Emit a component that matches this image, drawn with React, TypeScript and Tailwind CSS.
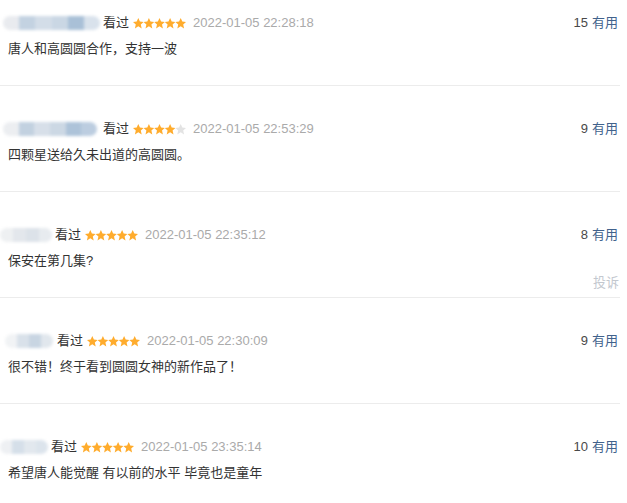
import React from "react"

type Comment = {
  nameW: number
  nameMl: number
  gap: number
  blobs: string[]
  rating: number
  time: string
  votes: number
  text: string
  report?: boolean
}

const comments: Comment[] = [
  {
    nameW: 97,
    nameMl: 3,
    gap: 3,
    blobs: ["#e9ebef", "#c3d2e1", "#d3dde8", "#cad7e4", "#a9c0d7", "#d9e2ec"],
    rating: 5,
    time: "2022-01-05 22:28:18",
    votes: 15,
    text: "唐人和高圆圆合作，支持一波",
  },
  {
    nameW: 94,
    nameMl: 3,
    gap: 6,
    blobs: ["#eceef1", "#c2d1e0", "#d7dfe9", "#ccd8e4", "#adc3d9", "#bccde0"],
    rating: 4,
    time: "2022-01-05 22:53:29",
    votes: 9,
    text: "四颗星送给久未出道的高圆圆。",
  },
  {
    nameW: 52,
    nameMl: 0,
    gap: 3,
    blobs: ["#eef0f2", "#e3e7ec", "#dce2e9", "#e7ebef"],
    rating: 5,
    time: "2022-01-05 22:35:12",
    votes: 8,
    text: "保安在第几集?",
    report: true,
  },
  {
    nameW: 48,
    nameMl: 5,
    gap: 4,
    blobs: ["#f1f3f5", "#d9e1ea", "#c8d5e2", "#e1e7ed"],
    rating: 5,
    time: "2022-01-05 22:30:09",
    votes: 9,
    text: "很不错！终于看到圆圆女神的新作品了！",
  },
  {
    nameW: 48,
    nameMl: 0,
    gap: 3,
    blobs: ["#eef0f3", "#d5dfe9", "#e2e8ee", "#dce4ec"],
    rating: 5,
    time: "2022-01-05 23:35:14",
    votes: 10,
    text: "希望唐人能觉醒 有以前的水平 毕竟也是童年",
  },
]

// fat five-point star, ~10.6 x 10.5
const STAR = "5.3,0 6.9,3.6 10.6,3.9 7.8,6.4 8.7,10.5 5.3,8.3 1.9,10.5 2.8,6.4 0,3.9 3.7,3.6"

function Stars({ rating }: { rating: number }) {
  return (
    <svg width="53" height="11" viewBox="0 0 53 11" className="block">
      {[0, 1, 2, 3, 4].map((i) => (
        <polygon
          key={i}
          points={STAR}
          transform={`translate(${i * 10.6} 0)`}
          fill={i < rating ? "#ffac2d" : "#e3e3e3"}
        />
      ))}
    </svg>
  )
}

function Row({ c }: { c: Comment }) {
  return (
    <div className="border-b border-[#ececec] pt-[33px] pb-[5px]">
      <div className="flex items-center justify-between h-5">
        <div className="flex items-center">
          {/* blurred username */}
          <div
            className="flex h-[14px] overflow-hidden rounded-full blur-[1.5px]"
            style={{ width: c.nameW, marginLeft: c.nameMl, marginRight: c.gap }}
          >
            {c.blobs.map((b, i) => (
              <span key={i} className="flex-1 h-full" style={{ background: b }} />
            ))}
          </div>
          <span className="text-[#333]">看过</span>
          <span className="ml-[4px]">
            <Stars rating={c.rating} />
          </span>
          <span className="ml-[7px] text-[#aaa]">{c.time}</span>
        </div>
        <div className="pr-[2px]">
          <span className="text-[#494949]">{c.votes}</span>
          <span className="ml-[4px] text-[#41628c]">有用</span>
        </div>
      </div>
      <div className="mt-[6px] h-5 pl-[8px] text-[#333]">{c.text}</div>
      <div className="mt-[3px] h-[18px] text-right pr-[1px] leading-[18px] text-[#c3c8cf]">
        {c.report ? "投诉" : ""}
      </div>
    </div>
  )
}

export default function App() {
  return (
    <div
      className="w-[627px] h-[503px] overflow-hidden bg-white text-[13px] leading-5"
      style={{ fontFamily: '"Liberation Sans", "Noto Sans CJK SC", sans-serif' }}
    >
      <div className="w-[620px] -mt-[20px]">
        {comments.map((c, i) => (
          <Row key={i} c={c} />
        ))}
      </div>
    </div>
  )
}
